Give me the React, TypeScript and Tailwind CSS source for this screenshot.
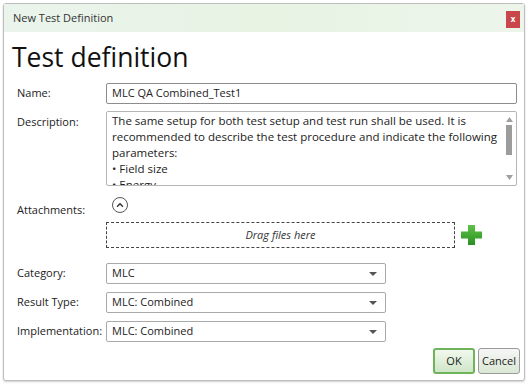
import { ChevronUp } from 'lucide-react'

const font = { fontFamily: '"Open Sans", "Noto Sans", sans-serif' }

function Select({ value }: { value: string }) {
  return (
    <div className="flex h-[21px] w-[280px] items-center justify-between rounded-[2px] border border-[#a9a9a9] bg-white pl-[5px] pr-[8px] text-[11px] text-[#222]">
      <span>{value}</span>
      <svg width="8" height="4" viewBox="0 0 8 4">
        <path d="M0 0h8L4 4z" fill="#555" />
      </svg>
    </div>
  )
}

export default function App() {
  return (
    <div className="h-[385px] w-[528px] bg-white p-[3px]" style={font}>
      <div className="flex h-[378px] w-[522px] flex-col rounded-[3px] border border-[#bdbdbd] bg-white shadow-[0_1px_2px_rgba(0,0,0,0.2)]">
        {/* title bar */}
        <div className="flex h-[28px] items-center justify-between bg-gradient-to-r from-[#eaf4ec] via-[#e8f3e4] to-[#edf5ea] pl-[9px] pr-[4px]">
          <span className="text-[11px] text-[#333]">New Test Definition</span>
          <div className="mt-[2px] flex h-[17px] w-[14px] items-center justify-center bg-[#c9474a] text-[8px] font-bold leading-none text-white">
            x
          </div>
        </div>

        <div className="px-[8px]">
          <h1 className="mt-[7px] text-[26.5px] leading-[36px] text-[#111]">Test definition</h1>

          <div className="mt-[8px] grid grid-cols-[89px_411px] items-center gap-y-[7px] pl-[5px] text-[11px] text-[#222]">
            <span>Name:</span>
            <div className="flex h-[21px] items-center rounded-[2px] border border-[#8c8c8c] pl-[5px] text-[11px]">
              MLC QA Combined_Test1
            </div>

            <span className="self-start pt-[3px]">Description:</span>
            <div className="flex h-[75px] rounded-[2px] border border-[#b5b5b5]">
              <div className="flex-1 overflow-hidden pl-[5px] pt-[1px] text-[11.5px] leading-[16px] text-[#222]">
                The same setup for both test setup and test run shall be used. It is recommended to describe the test procedure and indicate the following parameters:
                <br />• Field size
                <br />• Energy
              </div>
              <div className="flex w-[14px] flex-col items-center justify-between py-[5px]">
                <svg width="7" height="5" viewBox="0 0 7 5">
                  <path d="M0 5h7L3.5 0z" fill="#a0a0a0" />
                </svg>
                <div className="mb-auto mt-[3px] h-[30px] w-[6px] bg-[#9c9c9c]" />
                <svg width="7" height="5" viewBox="0 0 7 5">
                  <path d="M0 0h7L3.5 5z" fill="#a0a0a0" />
                </svg>
              </div>
            </div>
          </div>

          <div className="mt-[11px] grid grid-cols-[89px_auto] pl-[5px] text-[11px] text-[#222]">
            <span className="pt-[5px]">Attachments:</span>
            <div>
              <div className="ml-[6px] flex h-[16px] w-[16px] items-center justify-center rounded-full border-[1.5px] border-[#555]">
                <ChevronUp size={10} strokeWidth={3.5} color="#333" />
              </div>
              <div className="mt-[9px] flex items-center gap-[6px]">
                <div className="flex h-[26px] w-[349px] items-center justify-center border border-dashed border-[#444] text-[11px] italic text-[#333]">
                  Drag files here
                </div>
                <svg width="21" height="20" viewBox="0 0 21 20">
                  <defs>
                    <linearGradient id="g" x1="0" y1="0" x2="0" y2="1">
                      <stop offset="0" stopColor="#5ec24a" />
                      <stop offset="1" stopColor="#2a8f1f" />
                    </linearGradient>
                  </defs>
                  <path d="M7 0h7v6.5h7v7h-7V20H7v-6.5H0v-7h7z" fill="url(#g)" />
                </svg>
              </div>
            </div>
          </div>

          <div className="mt-[15px] grid grid-cols-[89px_auto] items-center gap-y-[8px] pl-[5px] text-[11px] text-[#222]">
            <span>Category:</span>
            <Select value="MLC" />
            <span>Result Type:</span>
            <Select value="MLC: Combined" />
            <span>Implementation:</span>
            <Select value="MLC: Combined" />
          </div>

          <div className="-mr-[4px] mt-[6px] flex justify-end gap-[3px]">
            <button className="h-[26px] w-[42px] rounded-[3px] border-2 border-[#6fb35a] bg-gradient-to-b from-[#f1f8ee] to-[#cfe6c7] text-[11px] text-[#222]">
              OK
            </button>
            <button className="h-[26px] w-[42px] rounded-[3px] border border-[#9a9a9a] bg-gradient-to-b from-[#f6f6f6] to-[#d9e8d4] text-[11px] text-[#222]">
              Cancel
            </button>
          </div>
        </div>
      </div>
    </div>
  )
}
